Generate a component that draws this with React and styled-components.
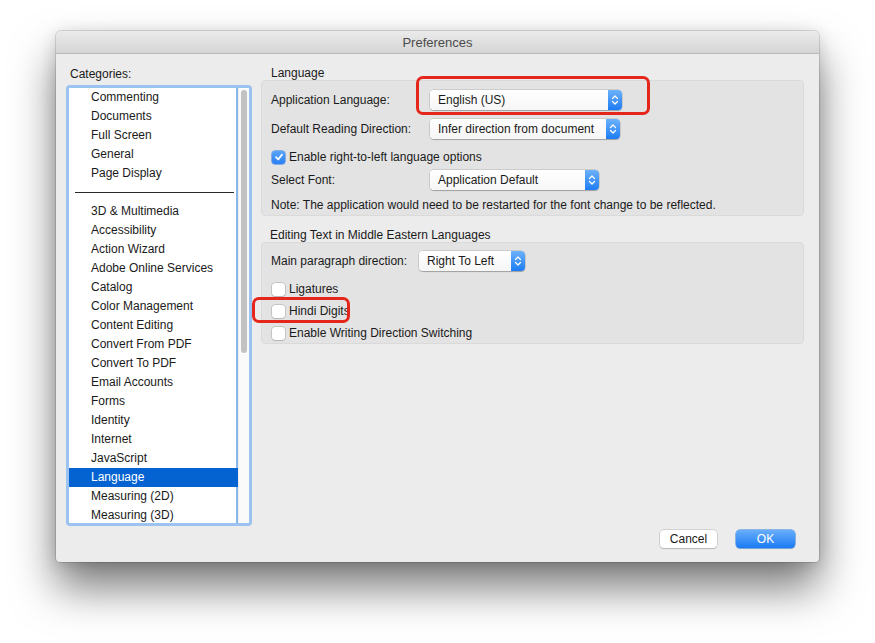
import React from 'react'
import styled, { createGlobalStyle } from 'styled-components'

const GlobalStyle = createGlobalStyle`
  html, body {
    margin: 0;
    padding: 0;
    background: #ffffff;
    font-family: "Liberation Sans", Arial, sans-serif;
    font-size: 12px;
    color: #1a1a1a;
  }
`

const Page = styled.div`
  padding: 31px 0 0 56px;
  height: 643px;
  box-sizing: border-box;
  overflow: hidden;
`

const Window = styled.div`
  position: relative;
  width: 763px;
  height: 531px;
  background: #ececec;
  border-radius: 5px 5px 4px 4px;
  box-shadow: 0 26px 44px rgba(0, 0, 0, 0.52), 0 0 0 1px rgba(0, 0, 0, 0.12), 0 2px 16px rgba(0, 0, 0, 0.14);
  display: flex;
  flex-direction: column;
`

const TitleBar = styled.div`
  height: 22px;
  flex-shrink: 0;
  background: linear-gradient(#ebebeb, #d5d5d5);
  border-bottom: 1px solid #b8b8b8;
  border-radius: 5px 5px 0 0;
  display: flex;
  align-items: center;
  justify-content: center;
  font-size: 13px;
  color: #4b4b4b;
`

const Content = styled.div`
  flex: 1;
  display: flex;
  gap: 9px;
  padding: 11px 15px 0 10px;
`

const LeftCol = styled.div`
  width: 186px;
  flex-shrink: 0;
`

const ColLabel = styled.div`
  height: 16px;
  line-height: 16px;
  padding-left: 4px;
  margin: 1px 0 3px;
`

const ListBox = styled.div`
  height: 441px;
  box-sizing: border-box;
  border: 3px solid #9cc2ef;
  border-radius: 4px;
  background: #ffffff;
  display: flex;
  overflow: hidden;
`

const Items = styled.div`
  flex: 1;
  box-shadow: inset -2px 0 #8ab6ee;
`

const Item = styled.div`
  height: 19px;
  line-height: 19px;
  padding-left: 22px;
  white-space: nowrap;
  background: ${p => (p.$selected ? '#0463d1' : 'transparent')};
  color: ${p => (p.$selected ? '#ffffff' : '#1a1a1a')};
`

const Separator = styled.div`
  height: 19px;
  display: flex;
  align-items: center;
  padding: 0 4px 0 6px;
  &::after {
    content: '';
    flex: 1;
    height: 1px;
    background: #2a2a2a;
  }
`

const Track = styled.div`
  width: 11px;
  flex-shrink: 0;
  background: #fafafa;
  border-left: 1px solid #ededed;
  padding: 2px 0 0 2px;
  box-sizing: border-box;
`

const Thumb = styled.div`
  width: 6px;
  height: 263px;
  border-radius: 3px;
  background: #c2c2c2;
`

const RightCol = styled.div`
  flex: 1;
  padding-top: 1px;
`

const SectionLabel = styled.div`
  height: 14px;
  line-height: 14px;
  padding-left: ${p => p.$indent || 10}px;
  margin-top: ${p => p.$mt || 0}px;
`

const Group = styled.div`
  background: #e3e3e3;
  border: 1px solid #dadada;
  border-radius: 4px;
  padding: ${p => p.$pt || 8}px 9px 0;
  height: ${p => p.$h}px;
  box-sizing: border-box;
  display: flex;
  flex-direction: column;
`

const Row = styled.div`
  height: ${p => p.$h || 22}px;
  margin-bottom: ${p => p.$mb || 0}px;
  flex-shrink: 0;
  display: flex;
  align-items: center;
  white-space: nowrap;
`

const RowLabel = styled.div`
  width: ${p => p.$w}px;
  flex-shrink: 0;
`

const Popup = styled.div`
  width: ${p => p.$w}px;
  height: 20px;
  box-sizing: border-box;
  display: flex;
  align-items: stretch;
  background: #ffffff;
  border-radius: 4px;
  box-shadow: 0 0 0 0.5px rgba(0, 0, 0, 0.2), 0 1px 1px rgba(0, 0, 0, 0.22);
  overflow: hidden;
`

const PopupText = styled.div`
  flex: 1;
  padding-left: 8px;
  display: flex;
  align-items: center;
  background: linear-gradient(#ffffff, #f6f6f6);
`

const PopupCap = styled.div`
  width: 14px;
  background: linear-gradient(#6cb2fb, #1d7cf4);
  display: flex;
  align-items: center;
  justify-content: center;
`

const CheckBox = styled.div`
  width: 13px;
  height: 13px;
  box-sizing: border-box;
  border-radius: 3px;
  margin: 0 4px 0 1px;
  background: ${p => (p.$checked ? 'linear-gradient(#58a4fa, #2a80f4)' : '#ffffff')};
  box-shadow: ${p => (p.$checked ? '0 0 0 0.5px #2a76e0' : '0 0 0 0.5px #a8a8a8, 0 1px 1px rgba(0,0,0,0.12)')};
  display: flex;
  align-items: center;
  justify-content: center;
`

const Footer = styled.div`
  height: 47px;
  flex-shrink: 0;
  display: flex;
  justify-content: flex-end;
  gap: 19px;
  padding: 0 24px 0 0;
`

const Button = styled.div`
  width: ${p => p.$w}px;
  height: 18px;
  margin-top: 4px;
  box-sizing: border-box;
  border-radius: 4px;
  font-size: 12px;
  display: flex;
  align-items: center;
  justify-content: center;
  color: ${p => (p.$primary ? '#ffffff' : '#1a1a1a')};
  background: ${p => (p.$primary ? 'linear-gradient(#68aefb, #1b7af5)' : '#ffffff')};
  box-shadow: ${p => (p.$primary ? '0 0 0 0.5px #2d7ae0, 0 1px 1px rgba(0,0,0,0.15)' : '0 0 0 0.5px #b5b5b5, 0 1px 1px rgba(0,0,0,0.2)')};
`

const Highlight = styled.div`
  position: absolute;
  left: ${p => p.$x}px;
  top: ${p => p.$y}px;
  width: ${p => p.$w}px;
  height: ${p => p.$h}px;
  box-sizing: border-box;
  border: 3px solid #e4261b;
  border-radius: 7px;
  pointer-events: none;
`

const Chevrons = () => (
  <svg width="8" height="12" viewBox="0 0 8 12">
    <path d="M1.5 4.5 L4 2 L6.5 4.5 M1.5 7.5 L4 10 L6.5 7.5" fill="none" stroke="#ffffff" strokeWidth="1.3" strokeLinecap="round" strokeLinejoin="round" />
  </svg>
)

const Tick = () => (
  <svg width="10" height="10" viewBox="0 0 10 10">
    <path d="M2 5.2 L4.2 7.4 L8 2.6" fill="none" stroke="#ffffff" strokeWidth="1.7" strokeLinecap="round" strokeLinejoin="round" />
  </svg>
)

const Select = ({ w, children }) => (
  <Popup $w={w}>
    <PopupText>{children}</PopupText>
    <PopupCap><Chevrons /></PopupCap>
  </Popup>
)

const topItems = ['Commenting', 'Documents', 'Full Screen', 'General', 'Page Display']
const moreItems = [
  '3D & Multimedia', 'Accessibility', 'Action Wizard', 'Adobe Online Services', 'Catalog',
  'Color Management', 'Content Editing', 'Convert From PDF', 'Convert To PDF', 'Email Accounts',
  'Forms', 'Identity', 'Internet', 'JavaScript', 'Language', 'Measuring (2D)', 'Measuring (3D)',
]

export default function App() {
  return (
    <Page>
      <GlobalStyle />
      <Window>
        <TitleBar>Preferences</TitleBar>
        <Content>
          <LeftCol>
            <ColLabel>Categories:</ColLabel>
            <ListBox>
              <Items>
                {topItems.map(name => <Item key={name}>{name}</Item>)}
                <Separator />
                {moreItems.map(name => (
                  <Item key={name} $selected={name === 'Language'}>{name}</Item>
                ))}
              </Items>
              <Track><Thumb /></Track>
            </ListBox>
          </LeftCol>
          <RightCol>
            <SectionLabel>Language</SectionLabel>
            <Group $h={136}>
              <Row $h={22}>
                <RowLabel $w={159}>Application Language:</RowLabel>
                <Select w={192}>English (US)</Select>
              </Row>
              <Row $h={36}>
                <RowLabel $w={159}>Default Reading Direction:</RowLabel>
                <Select w={190}>Infer direction from document</Select>
              </Row>
              <Row $h={20}>
                <CheckBox $checked><Tick /></CheckBox>
                Enable right-to-left language options
              </Row>
              <Row $h={26}>
                <RowLabel $w={159}>Select Font:</RowLabel>
                <Select w={169}>Application Default</Select>
              </Row>
              <Row $h={24}>
                Note: The application would need to be restarted for the font change to be reflected.
              </Row>
            </Group>
            <SectionLabel $indent={9} $mt={12}>Editing Text in Middle Eastern Languages</SectionLabel>
            <Group $h={102} $pt={7}>
              <Row $h={22} $mb={6}>
                <RowLabel $w={148}>Main paragraph direction:</RowLabel>
                <Select w={106}>Right To Left</Select>
              </Row>
              <Row>
                <CheckBox />
                Ligatures
              </Row>
              <Row>
                <CheckBox />
                Hindi Digits
              </Row>
              <Row>
                <CheckBox />
                Enable Writing Direction Switching
              </Row>
            </Group>
          </RightCol>
        </Content>
        <Footer>
          <Button $w={57}>Cancel</Button>
          <Button $w={59} $primary>OK</Button>
        </Footer>
        <Highlight $x={360} $y={45} $w={234} $h={39} />
        <Highlight $x={196} $y={266} $w={98} $h={26} />
      </Window>
    </Page>
  )
}
